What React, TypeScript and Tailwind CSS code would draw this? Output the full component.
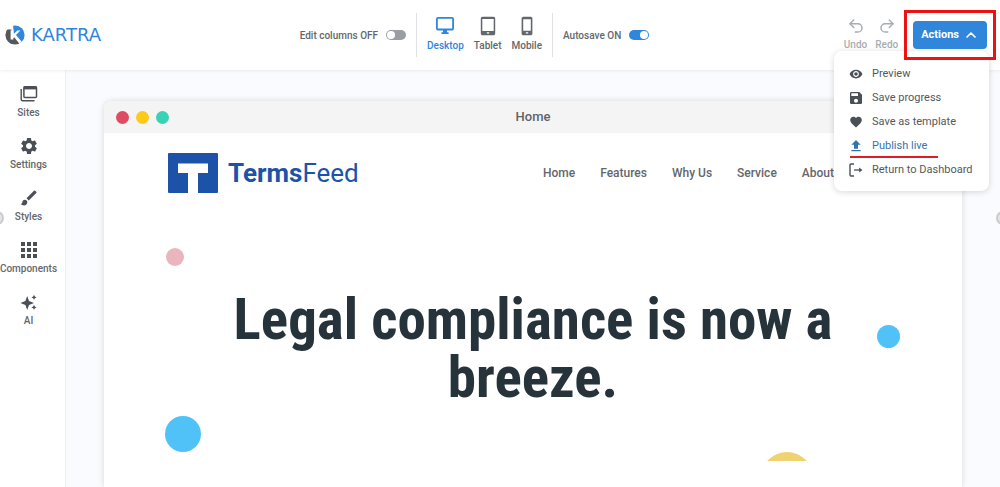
import type { ReactNode } from "react";
import clsx from "clsx";
import { ChevronUp, Redo2, Undo2 } from "lucide-react";
import {
  MdApps,
  MdBrush,
  MdFavorite,
  MdFileUpload,
  MdSave,
  MdSettings,
  MdVisibility,
} from "react-icons/md";

function KartraMark() {
  return (
    <svg viewBox="0 0 20 20" className="size-5" aria-hidden="true">
      <clipPath id="kartra-disc">
        <circle cx="10" cy="10" r="9.6" />
      </clipPath>
      <g clipPath="url(#kartra-disc)">
        <path fill="#54585d" d="M0 4.5h6.5V20H0z" />
        <path fill="#54585d" d="M4 12h5l6.5 8H4z" />
        <path fill="#2f86db" d="M8 0h12v20h-3.2L9 10z" />
        <path
          fill="#fff"
          d="M5.6 5.4h2.8v3.8l4-3.8h3l-4.4 4.5 7 8.3-1.8 1.6-6.6-8-1.2 1.2v1.6H5.6z"
        />
      </g>
    </svg>
  );
}

function DesktopIcon() {
  return (
    <svg viewBox="0 0 20 20" className="size-5" fill="none" aria-hidden="true">
      <rect x="1.9" y="1.9" width="16.2" height="11.6" rx="1" stroke="currentColor" strokeWidth="1.8" />
      <path fill="currentColor" d="M8 14h4v2.2h1.6V18H6.4v-1.8H8z" />
    </svg>
  );
}

function TabletIcon() {
  return (
    <svg viewBox="0 0 20 20" className="size-5" aria-hidden="true">
      <path
        fill="currentColor"
        fillRule="evenodd"
        d="M4.6.8h10.8c1 0 1.8.8 1.8 1.8v14.8c0 1-.8 1.8-1.8 1.8H4.6c-1 0-1.8-.8-1.8-1.8V2.6c0-1 .8-1.8 1.8-1.8zM4.3 2.9v12h11.4v-12zM8.8 16.2v1.4h2.4v-1.4z"
      />
    </svg>
  );
}

function MobileIcon() {
  return (
    <svg viewBox="0 0 20 20" className="size-5" aria-hidden="true">
      <path
        fill="currentColor"
        fillRule="evenodd"
        d="M6.4.8h7.2c1 0 1.8.8 1.8 1.8v14.8c0 1-.8 1.8-1.8 1.8H6.4c-1 0-1.8-.8-1.8-1.8V2.6c0-1 .8-1.8 1.8-1.8zM6.2 3.2v11.6h7.6V3.2zM8.8 16.2v1.4h2.4v-1.4z"
      />
    </svg>
  );
}

function SitesIcon() {
  return (
    <svg viewBox="0 0 20 20" className="size-5" fill="none" aria-hidden="true">
      <rect x="4.9" y="2.8" width="12.6" height="10.8" rx="1" stroke="currentColor" strokeWidth="1.5" />
      <path fill="currentColor" d="M4.7 2.4h13v3h-13z" />
      <path stroke="currentColor" strokeWidth="1.4" d="M2.2 5v10.6c0 .7.4 1.1 1.1 1.1h12.2" />
    </svg>
  );
}

function SparkleIcon() {
  return (
    <svg viewBox="0 0 20 20" className="size-5" fill="currentColor" aria-hidden="true">
      <path d="M8.2 4 10 9l5 2-5 2-1.8 5-1.8-5-5-2 5-2z" />
      <path d="M15 2.8l.8 1.8 1.8.8-1.8.8L15 8l-.8-1.8-1.8-.8 1.8-.8z" />
      <path d="M15 12.8l.8 1.8 1.8.8-1.8.8L15 18l-.8-1.8-1.8-.8 1.8-.8z" />
    </svg>
  );
}

function ExitIcon() {
  return (
    <svg viewBox="0 0 14 14" className="size-3.5" fill="none" stroke="currentColor" aria-hidden="true">
      <path strokeWidth="1.4" d="M5 1H2c-.7 0-1 .3-1 1v10c0 .7.3 1 1 1h3" />
      <path strokeWidth="1.3" d="M5 7h7" />
      <path fill="currentColor" stroke="none" d="M10.2 4.4 13.4 7l-3.2 2.6z" />
    </svg>
  );
}

const devices = [
  { label: "Desktop", icon: <DesktopIcon />, active: true },
  { label: "Tablet", icon: <TabletIcon />, active: false },
  { label: "Mobile", icon: <MobileIcon />, active: false },
];

const tools = [
  { label: "Sites", icon: <SitesIcon /> },
  { label: "Settings", icon: <MdSettings className="size-5" /> },
  { label: "Styles", icon: <MdBrush className="size-5" /> },
  { label: "Components", icon: <MdApps className="size-6" /> },
  { label: "AI", icon: <SparkleIcon /> },
];

const actions = [
  { label: "Preview", icon: <MdVisibility className="size-3.5" /> },
  { label: "Save progress", icon: <MdSave className="size-4" /> },
  { label: "Save as template", icon: <MdFavorite className="size-3.5" /> },
  { label: "Publish live", icon: <MdFileUpload className="size-4" />, marked: true },
  { label: "Return to Dashboard", icon: <ExitIcon /> },
];

const siteLinks = ["Home", "Features", "Why Us", "Service", "About"];

function Toggle({ on, children }: { on: boolean; children: ReactNode }) {
  return (
    <label className="flex items-center gap-2 whitespace-nowrap">
      {children}
      <input
        type="checkbox"
        role="switch"
        defaultChecked={on}
        className="flex h-2.5 w-5 appearance-none items-center rounded-full bg-[#9a9ea3] px-px before:size-2 before:rounded-full before:bg-white checked:justify-end checked:bg-[#2f86db]"
      />
    </label>
  );
}

function ActionsMenu() {
  return (
    <ul className="absolute top-[41px] right-[7px] w-[155px] rounded-lg bg-white px-3.5 pt-[11px] pb-[9px] shadow-[0_1px_6px_rgba(0,0,0,0.16)]">
      {actions.map((action) => (
        <li key={action.label} className="relative">
          <button
            type="button"
            className={clsx(
              "flex h-6 w-full items-center gap-2 text-[11px] font-normal whitespace-nowrap",
              action.marked ? "text-[#3474ad]" : "text-[#54585d]",
            )}
          >
            <span
              className={clsx(
                "flex size-4 shrink-0 items-center justify-center",
                !action.marked && "text-[#4b5056]",
              )}
            >
              {action.icon}
            </span>
            {action.label}
          </button>
          {action.marked && (
            <span className="absolute bottom-0 left-0.5 h-0.5 w-[88px] bg-[#dc1f26]" />
          )}
        </li>
      ))}
    </ul>
  );
}

function TopBar() {
  return (
    <header className="relative z-10 flex h-[70px] items-center justify-between bg-white pr-1 pl-[5px] text-[10px] font-medium text-[#63676c] shadow-[0_0_4px_rgba(0,0,0,0.1)]">
      <a href="#" className="flex items-center gap-1.5 text-[#2f86db]">
        <KartraMark />
        <span className="font-['DejaVu_Sans',sans-serif] text-lg leading-5 font-normal">
          KARTRA
        </span>
      </a>

      <div className="flex items-center pl-1">
        <Toggle on={false}>Edit columns OFF</Toggle>
        <div className="mx-2.5 flex h-11 items-center gap-2.5 border-x border-[#dfe1e4] px-2.5">
          {devices.map((device) => (
            <button
              key={device.label}
              type="button"
              className={clsx(
                "flex flex-col items-center gap-0.5",
                device.active && "text-[#2f86db]",
              )}
            >
              {device.icon}
              <span className="leading-4">{device.label}</span>
            </button>
          ))}
        </div>
        <Toggle on>Autosave ON</Toggle>
      </div>

      <div className="flex items-center gap-1.5">
        <div className="flex gap-2 text-[#a9adb1]">
          <button type="button" className="flex flex-col items-center gap-0.5">
            <Undo2 className="size-[18px]" />
            <span className="leading-4">Undo</span>
          </button>
          <button type="button" className="flex flex-col items-center gap-0.5">
            <Redo2 className="size-[18px]" />
            <span className="leading-4">Redo</span>
          </button>
        </div>
        <div className="relative">
          <div className="relative z-10 border-3 border-[#ee1111] px-1.5 py-2">
            <button
              type="button"
              aria-expanded="true"
              className="flex h-7 items-center gap-1 rounded bg-[#2f86db] px-2 text-[11px] font-bold text-white"
            >
              Actions
              <ChevronUp className="size-4" strokeWidth={2.5} />
            </button>
          </div>
          <ActionsMenu />
        </div>
      </div>
    </header>
  );
}

function ToolRail() {
  return (
    <nav className="relative w-[66px] shrink-0 border-r border-[#eff0f3] bg-white pt-3 pr-2">
      <ul>
        {tools.map((tool) => (
          <li key={tool.label} className="h-[52px]">
            <button
              type="button"
              className="flex w-full flex-col items-center text-[10px] font-medium text-[#63676c]"
            >
              <span className="flex h-6 items-center text-[#4b5056]">{tool.icon}</span>
              <span className="leading-[14px]">{tool.label}</span>
            </button>
          </li>
        ))}
      </ul>
      <span className="absolute top-[141px] -left-2.5 size-3.5 rounded-full border-2 border-[#c9cbcd] bg-[#e4e4e5]" />
    </nav>
  );
}

function TermsFeedLogo() {
  return (
    <a href="#" className="flex items-center gap-2.5 text-[26px] leading-8 text-[#1c52a8]">
      <svg viewBox="0 0 50 40" className="h-10 w-[50px]" aria-hidden="true">
        <rect width="50" height="40" rx="1" fill="currentColor" />
        <path fill="#fff" d="M10 10.5h30v9.5H30v20H20V20H10z" />
      </svg>
      <span>
        <span className="font-bold">Terms</span>Feed
      </span>
    </a>
  );
}

function SitePreview() {
  return (
    <div className="flex flex-1 flex-col overflow-hidden rounded-t-lg bg-white shadow-[0_0_6px_rgba(0,0,0,0.14)]">
      <div className="flex h-8 shrink-0 items-center bg-[#f4f4f4] px-3">
        <div className="flex flex-1 gap-[7px]">
          <span className="size-[13px] rounded-full bg-[#e04a63]" />
          <span className="size-[13px] rounded-full bg-[#fdc91b]" />
          <span className="size-[13px] rounded-full bg-[#38d3b5]" />
        </div>
        <span className="text-[13px] font-medium">Home</span>
        <div className="flex-1" />
      </div>

      <div className="flex h-20 shrink-0 items-center justify-between pr-32 pl-16">
        <TermsFeedLogo />
        <nav className="flex gap-[25px] text-xs font-medium whitespace-nowrap text-[#63676c]">
          {siteLinks.map((link) => (
            <a key={link} href="#">
              {link}
            </a>
          ))}
        </nav>
      </div>

      <section className="relative h-[248px] shrink-0 overflow-hidden pt-[78px]">
        <h1 className="mx-auto max-w-[640px] text-center font-['Roboto_Condensed',Roboto,sans-serif] text-[57px] leading-[58px] font-bold text-[#26333b]">
          Legal compliance is now a breeze.
        </h1>
        <span className="absolute top-[35px] left-[62px] size-[18px] rounded-full bg-[#eab5bd]" />
        <span className="absolute top-[203px] left-[61px] size-9 rounded-full bg-[#50c2f7]" />
        <span className="absolute top-[112px] right-[62px] size-[23px] rounded-full bg-[#50c2f7]" />
        <span className="absolute top-[239px] right-[149px] size-[52px] rounded-full bg-[#efd271]" />
      </section>
    </div>
  );
}

export default function App() {
  return (
    <div className="flex h-screen flex-col overflow-hidden bg-[#fafbfe] font-[Roboto,sans-serif] text-[#5f6368]">
      <TopBar />
      <div className="flex min-h-0 flex-1">
        <ToolRail />
        <main className="relative flex flex-1 px-[38px] pt-[31px]">
          <SitePreview />
          <span className="absolute top-[141px] -right-2.5 size-3.5 rounded-full border-2 border-[#c9cbcd] bg-[#e4e4e5]" />
        </main>
      </div>
    </div>
  );
}
